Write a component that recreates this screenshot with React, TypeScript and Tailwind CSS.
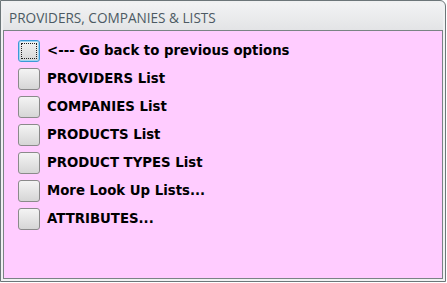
const items = [
  '<--- Go back to previous options',
  'PROVIDERS List',
  'COMPANIES List',
  'PRODUCTS List',
  'PRODUCT TYPES List',
  'More Look Up Lists...',
  'ATTRIBUTES...',
]

function Box({ focused }: { focused?: boolean }) {
  return (
    <div
      className={
        'w-[22px] h-[22px] shrink-0 rounded-[3px] border p-[2px] bg-gradient-to-b from-[#f4f4f4] to-[#d6d6d6] ' +
        (focused ? 'border-[#3c9ad6] shadow-[inset_0_0_0_1px_#9fd5f3]' : 'border-[#8a8a8a]')
      }
    >
      {focused && <div className="w-full h-full border border-dotted border-[#202020]"></div>}
    </div>
  )
}

export default function App() {
  return (
    <div className="w-[447px] h-[283px] bg-white font-['DejaVu_Sans',sans-serif]">
      <div className="w-[446px] h-[282px] border border-[#6c7679] rounded-tr-[6px] bg-[#f0f1f2] p-[2px] flex flex-col">
        <div className="h-[27px] px-[6px] pt-[7px] text-[13.6px] leading-[16px] text-[#4c5a63] font-['Open_Sans',sans-serif] bg-gradient-to-b from-[#f2f3f4] to-[#e3e4e6]">
          PROVIDERS, COMPANIES &amp; LISTS
        </div>
        <div className="flex-1 border border-[#7a8385] bg-[#ffccff] pl-[14px] pt-[9px] flex flex-col gap-[6px]">
          {items.map((t, i) => (
            <div key={t} className="flex items-center gap-[7px] h-[22px]">
              <Box focused={i === 0} />
              <span className="text-[13.3px] font-bold text-black">{t}</span>
            </div>
          ))}
        </div>
      </div>
    </div>
  )
}
